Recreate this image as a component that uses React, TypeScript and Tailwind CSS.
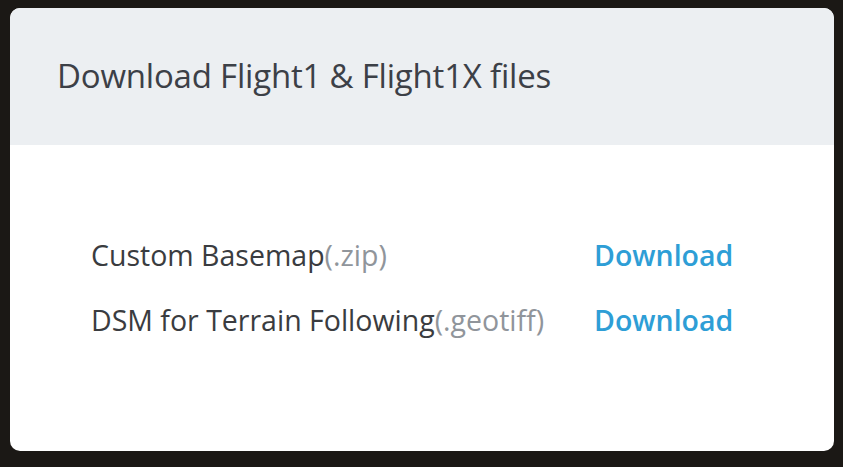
import React from 'react';

const FILES = [
  { name: 'Custom Basemap', ext: '(.zip)' },
  { name: 'DSM for Terrain Following', ext: '(.geotiff)' },
];

export default function App() {
  return (
    <div
      className="w-[843px] h-[467px] bg-[#1b1815] pt-[8px] pl-[10px]"
      style={{ fontFamily: '"Open Sans", "Noto Sans", sans-serif' }}
    >
      <div className="w-[824px] h-[443px] rounded-[10px] overflow-hidden bg-white flex flex-col">
        <div className="h-[137px] bg-[#eceff2] flex items-center pl-[47px] pb-[2px]">
          <h1 className="text-[33px] text-[#3c4047] font-normal tracking-[-0.2px]">Download Flight1 &amp; Flight1X files</h1>
        </div>
        <div className="pt-[93px] pl-[81px] flex flex-col gap-[30px]">
          {FILES.map(f => (
            <div key={f.name} className="flex items-center h-[35px]">
              <div className="w-[503px] text-[28.5px] text-[#3a3c40]">
                {f.name}
                <span className="text-[#90959b]">{f.ext}</span>
              </div>
              <a className="text-[28.5px] font-semibold text-[#2e9ed6] cursor-pointer">Download</a>
            </div>
          ))}
        </div>
      </div>
    </div>
  );
}
